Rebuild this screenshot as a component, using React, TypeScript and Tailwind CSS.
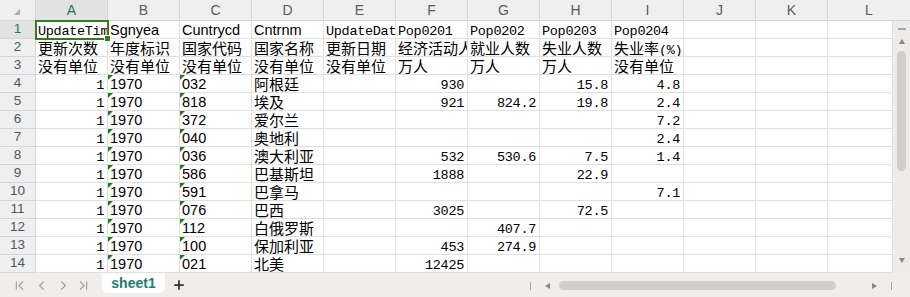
import React from "react";
import { ChevronFirst, ChevronLeft, ChevronRight, ChevronLast, Plus } from "lucide-react";

type F = "m" | "s" | "c";
type Cell = { v: string; f: F; r?: boolean; tri?: boolean };

const COLS = ["A", "B", "C", "D", "E", "F", "G", "H", "I", "J", "K", "L"];

const fontCls: Record<F, string> = {
  m: "font-['Liberation_Mono',monospace] text-[13.5px] tracking-[-0.3px]",
  s: "font-['Liberation_Sans',Arial,sans-serif] text-[14.5px]",
  c: "font-['Liberation_Mono',monospace] text-[13.5px] tracking-[-0.3px]",
};

function Txt({ s, f }: { s: string; f: F }) {
  const parts = s.match(/[\u0000-\u00ff]+|[^\u0000-\u00ff]+/g) || [];
  return (
    <>
      {parts.map((p, i) =>
        /[^\u0000-\u00ff]/.test(p) ? (
          <span key={i} className="font-['Noto_Sans_CJK_SC',sans-serif] text-[15px]">
            {p}
          </span>
        ) : (
          <span key={i} className={fontCls[f]}>
            {p}
          </span>
        )
      )}
    </>
  );
}

const m = (v: string): Cell => ({ v, f: "m" });
const s = (v: string): Cell => ({ v, f: "s" });
const c = (v: string): Cell => ({ v, f: "c" });
const n = (v: string): Cell => ({ v, f: "m", r: true });
const t = (v: string): Cell => ({ v, f: "s", tri: true });

const data: Array<[string, string, string, string, string, string, string]> = [
  ["032", "阿根廷", "930", "", "15.8", "4.8", ""],
  ["818", "埃及", "921", "824.2", "19.8", "2.4", ""],
  ["372", "爱尔兰", "", "", "", "7.2", ""],
  ["040", "奥地利", "", "", "", "2.4", ""],
  ["036", "澳大利亚", "532", "530.6", "7.5", "1.4", ""],
  ["586", "巴基斯坦", "1888", "", "22.9", "", ""],
  ["591", "巴拿马", "", "", "", "7.1", ""],
  ["076", "巴西", "3025", "", "72.5", "", ""],
  ["112", "白俄罗斯", "", "407.7", "", "", ""],
  ["100", "保加利亚", "453", "274.9", "", "", ""],
  ["021", "北美", "12425", "", "", "", ""],
];

const rows: Cell[][] = [
  [m("UpdateTime"), s("Sgnyea"), s("Cuntrycd"), s("Cntrnm"), m("UpdateDate"), m("Pop0201"), m("Pop0202"), m("Pop0203"), m("Pop0204")],
  ["更新次数", "年度标识", "国家代码", "国家名称", "更新日期", "经济活动人口", "就业人数", "失业人数", "失业率(%)"].map(c),
  ["没有单位", "没有单位", "没有单位", "没有单位", "没有单位", "万人", "万人", "万人", "没有单位"].map(c),
  ...data.map((d) => [n("1"), t("1970"), t(d[0]), c(d[1]), m(""), n(d[2]), n(d[3]), n(d[4]), n(d[5])]),
];

export default function App() {
  return (
    <div className="w-[910px] h-[297px] overflow-hidden bg-white flex flex-col text-black select-none">
      {/* column headers */}
      <div className="flex h-[21px] bg-[#efefef] shrink-0">
        <div className="w-[36px] h-[21px] border-r border-b border-[#d6d6d6] relative shrink-0">
          <div className="absolute left-[14px] top-[9px] w-0 h-0 border-b-[6px] border-b-[#ababab] border-l-[6px] border-l-transparent" />
        </div>
        {COLS.map((col, i) => (
          <div
            key={col}
            className={`${i === 11 ? "flex-1" : "w-[72px] shrink-0 border-r"} h-[21px] border-b border-[#d6d6d6] flex items-center justify-center font-['Liberation_Sans',Arial,sans-serif] text-[14px] ${
              i === 0 ? "bg-[#e2e2e2] text-[#217a4a]" : "text-[#5b5b5b]"
            }`}
          >
            {col}
          </div>
        ))}
      </div>

      {/* body */}
      <div className="flex h-[252px] shrink-0">
        <div className="w-[893px] flex flex-col relative">
          {Array.from({ length: 14 }).map((_, ri) => {
            const row = rows[ri] || [];
            return (
              <div key={ri} className="flex h-[18px] shrink-0">
                <div
                  className={`w-[36px] shrink-0 h-[18px] border-r border-b border-[#d6d6d6] flex items-center justify-center font-['Liberation_Sans',Arial,sans-serif] text-[13.5px] ${
                    ri === 0 ? "bg-[#e2e2e2] text-[#217a6e]" : "bg-[#efefef] text-[#4d5866]"
                  }`}
                >
                  {ri + 1}
                </div>
                {COLS.map((col, ci) => {
                  const cell = row[ci];
                  return (
                    <div
                      key={col}
                      className={`${ci === 11 ? "flex-1" : "w-[72px] shrink-0"} h-[18px] border-r border-b border-[#e0e0e0] relative`}
                    >
                      {cell && cell.v !== "" && (
                        <div
                          className={`h-[17px] overflow-hidden whitespace-nowrap leading-[17px] ${
                            cell.r ? "text-right pr-[3px]" : "text-left pl-[2px]"
                          }`}
                        >
                          <Txt s={cell.v} f={cell.f} />
                        </div>
                      )}
                      {cell && cell.tri && (
                        <div className="absolute left-0 top-0 w-0 h-0 border-t-[5px] border-t-[#1f7a1f] border-r-[5px] border-r-transparent" />
                      )}
                    </div>
                  );
                })}
              </div>
            );
          })}
          {/* selection overlay on A1 */}
          <div className="absolute left-[35px] top-[-1px] w-[74px] h-[20px] border-[2px] border-solid border-[#367a25] z-20 pointer-events-none">
            <div className="absolute right-[-4px] bottom-[-4px] w-[7px] h-[7px] bg-[#367a25] border border-solid border-white" />
          </div>
        </div>
        {/* vertical scrollbar */}
        <div className="w-[17px] h-[252px] bg-[#eeebe9] flex flex-col items-center shrink-0">
          <div className="mt-[7px] w-[8px] h-[2px] bg-[#a9a6a4]" />
          <div className="mt-[9px] w-0 h-0 border-l-[3px] border-l-transparent border-r-[3px] border-r-transparent border-b-[5px] border-b-[#8a8786]" />
          <div className="mt-[7px] w-[9px] h-[120px] rounded-full bg-[#d1cecc]" />
          <div className="flex-1" />
          <div className="mb-[10px] w-0 h-0 border-l-[3px] border-l-transparent border-r-[3px] border-r-transparent border-t-[5px] border-t-[#8a8786]" />
        </div>
      </div>

      {/* bottom bar */}
      <div className="flex-1 bg-[#f0edeb] flex items-start relative">
        <div className="flex items-center h-[24px] pl-[12px] text-[#a5a5a5]">
          <ChevronFirst size={15} strokeWidth={2} />
          <ChevronLeft size={15} strokeWidth={2} className="ml-[7px]" />
          <ChevronRight size={15} strokeWidth={2} className="ml-[7px]" />
          <ChevronLast size={15} strokeWidth={2} className="ml-[5px]" />
        </div>
        <div className="ml-[11px] w-[63px] h-[20px] bg-white rounded-b-[6px] flex items-center justify-center font-['Liberation_Sans',Arial,sans-serif] font-bold text-[14px] text-[#1b7c72] pt-[1px]">
          sheet1
        </div>
        <div className="ml-[7px] h-[24px] flex items-center text-[#333]">
          <Plus size={14} strokeWidth={3} />
        </div>
        {/* horizontal scrollbar */}
        <div className="absolute left-[530px] top-[8px] h-[9px] w-[362px] flex items-center">
          <div className="w-[1px] h-[8px] bg-[#a9a6a4]" />
          <div className="ml-[14px] w-0 h-0 border-t-[3px] border-t-transparent border-b-[3px] border-b-transparent border-r-[5px] border-r-[#8a8786]" />
          <div className="ml-[9px] w-[277px] h-[9px] rounded-full bg-[#d1cecc]" />
          <div className="ml-[36px] w-0 h-0 border-t-[3px] border-t-transparent border-b-[3px] border-b-transparent border-l-[5px] border-l-[#8a8786]" />
          <div className="ml-[14px] w-[1px] h-[8px] bg-[#a9a6a4]" />
        </div>
      </div>
    </div>
  );
}
